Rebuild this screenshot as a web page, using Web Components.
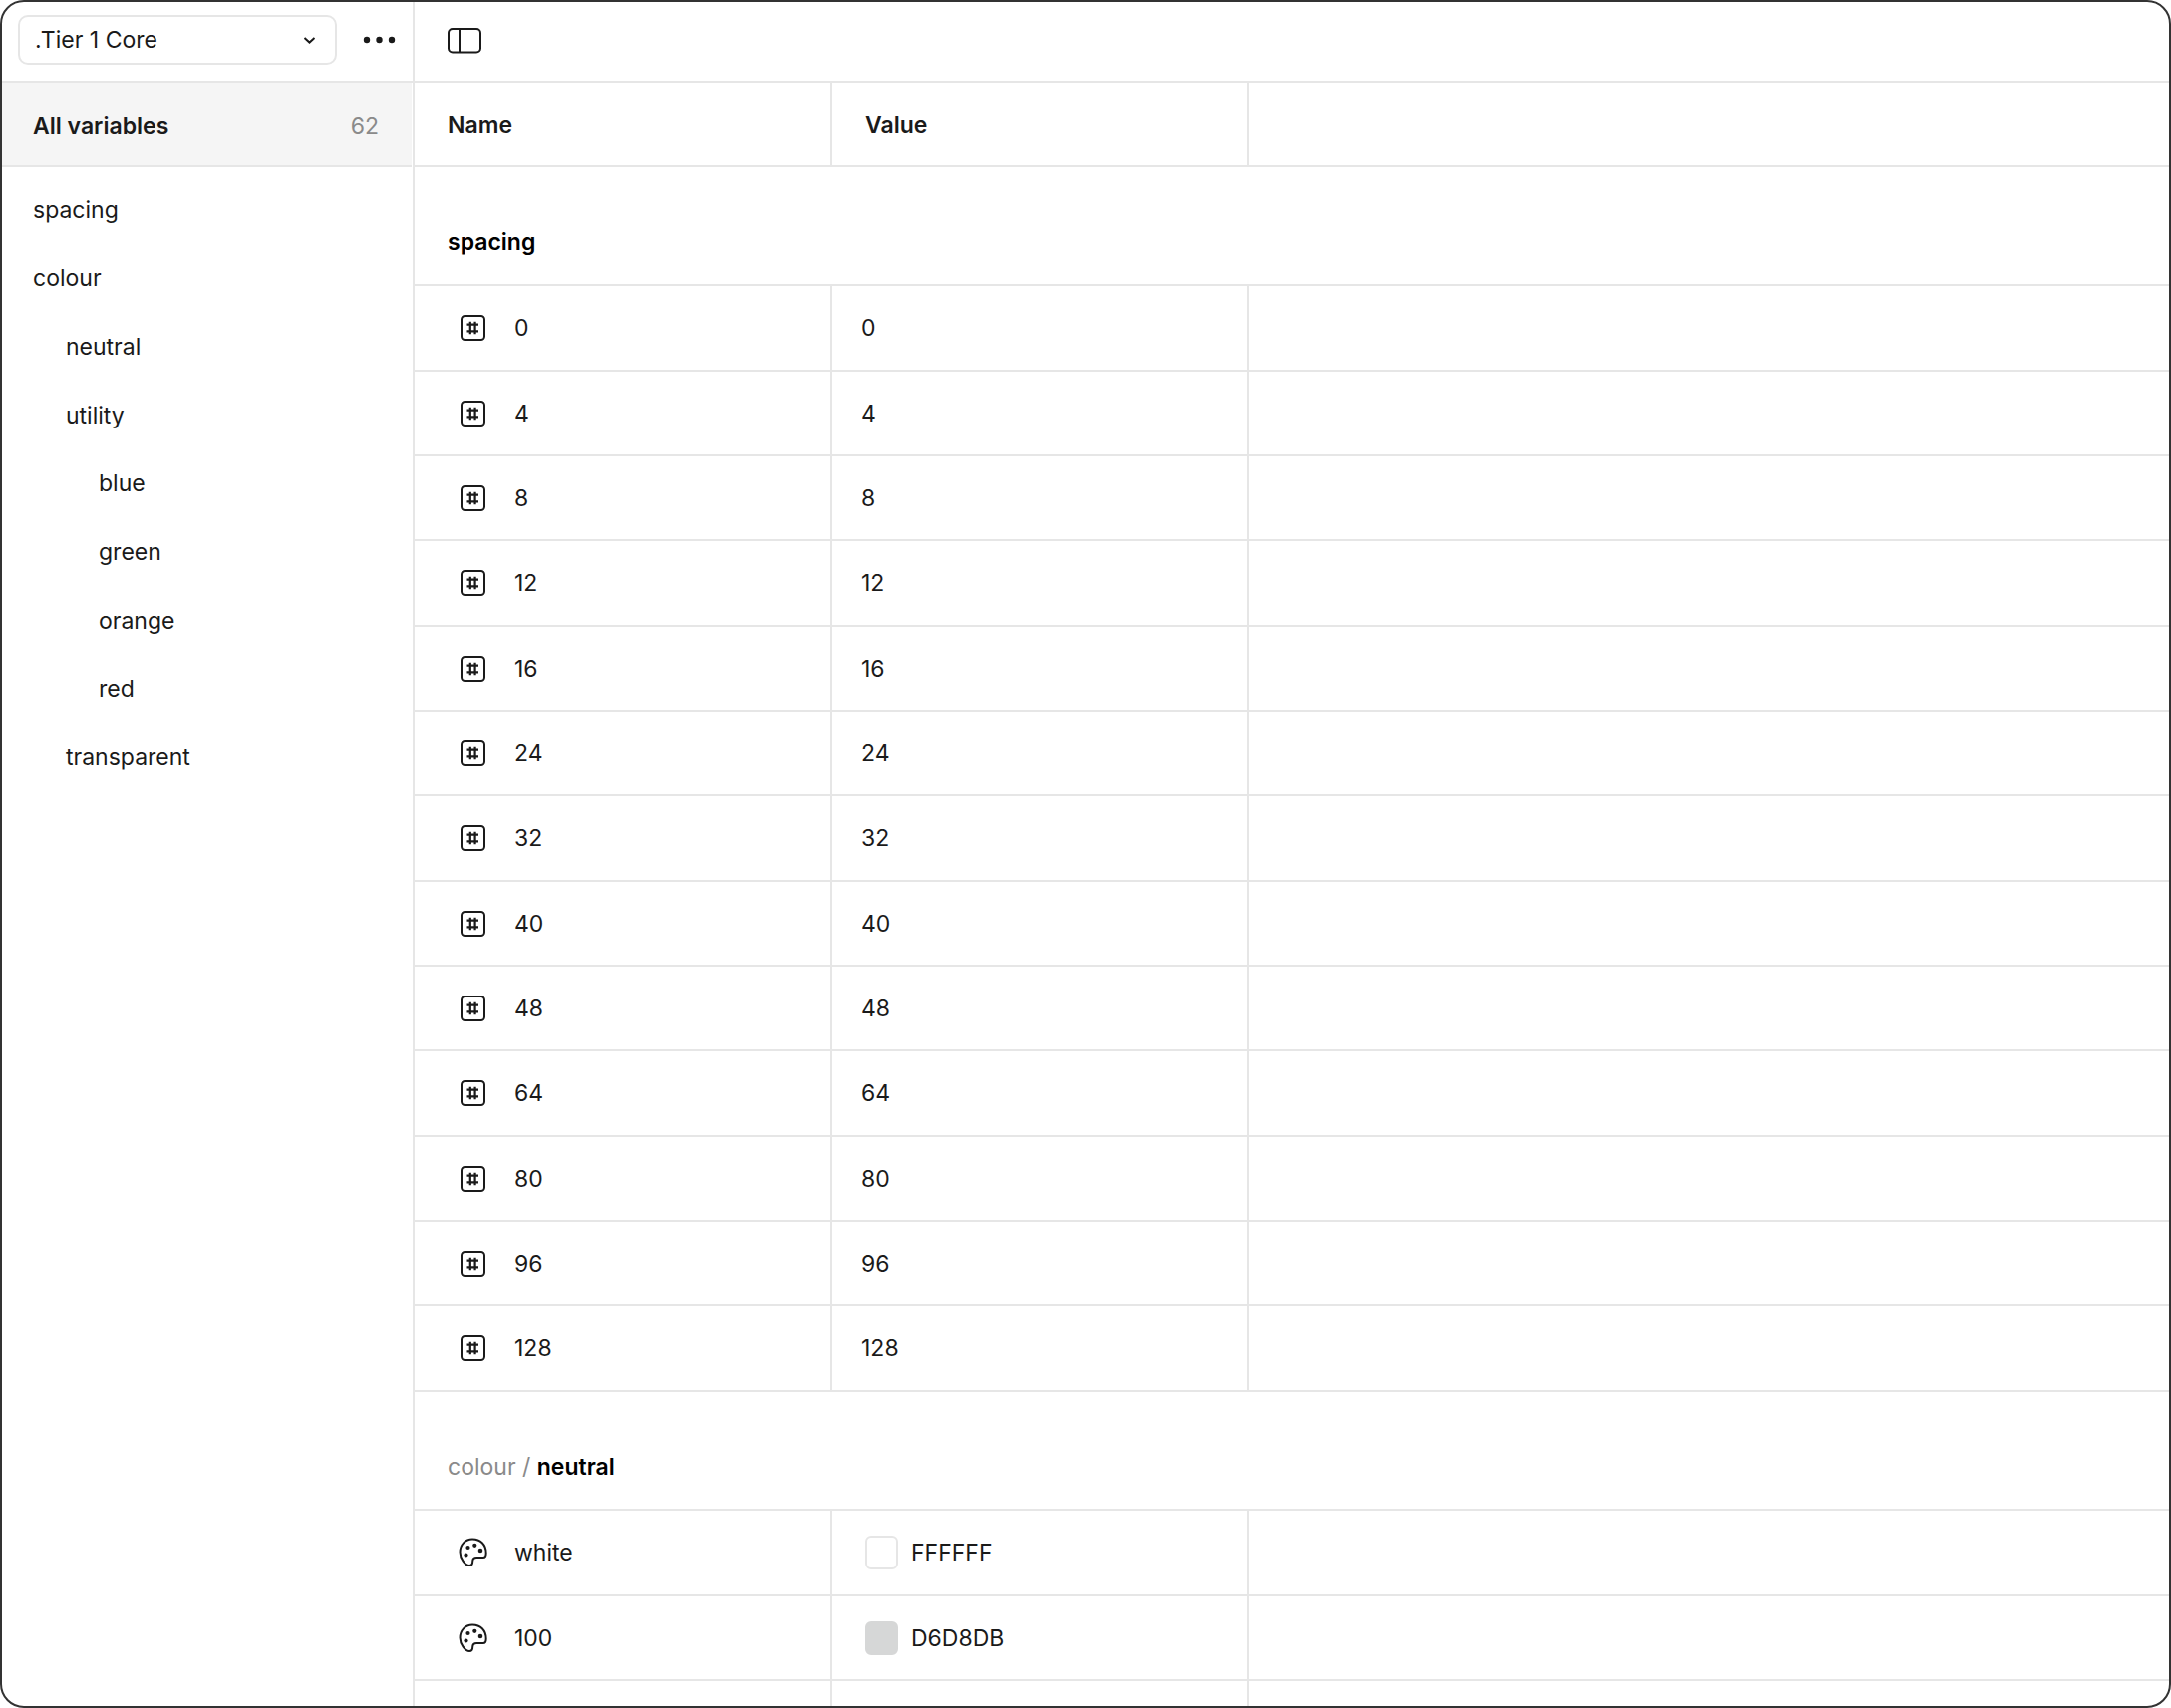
<!DOCTYPE html>
<html lang="en">
<head>
<meta charset="utf-8">
<title>Variables</title>
<style>
  html, body { height: 100%; margin: 0; background: #fff; }
  body {
    --line: #e6e6e6;
    --muted: #8a8a8a;
    font: 400 23px/28px Inter, "Liberation Sans", sans-serif;
    color: #1a1a1a;
  }
</style>
</head>
<body>
<variables-window>
  <collection-picker slot="tools"></collection-picker>
  <group-nav slot="side"></group-nav>
  <view-toolbar slot="bar"></view-toolbar>
  <variable-table slot="main"></variable-table>
</variables-window>

<script>
function define(name, html, setup) {
  const template = document.createElement('template');
  template.innerHTML = html;
  customElements.define(name, class extends HTMLElement {
    constructor() {
      super();
      this.attachShadow({ mode: 'open' }).append(template.content.cloneNode(true));
    }
    connectedCallback() { if (setup) setup(this, this.shadowRoot); }
  });
}

define('variables-window', `
<style>
  :host { display: grid; grid-template-columns: 414px minmax(0, 1fr); box-sizing: border-box;
    height: 100vh; overflow: hidden; border: 2px solid #333; border-radius: 24px; background: #fff; }
  aside, main { display: flex; flex-direction: column; min-width: 0; min-height: 0; }
  aside { border-right: 2px solid var(--line); }
  main { overflow: hidden; }
  ::slotted(*) { flex: none; }
</style>
<aside><slot name="tools"></slot><slot name="side"></slot></aside>
<main><slot name="bar"></slot><slot name="main"></slot></main>
`);

define('collection-picker', `
<style>
  :host { display: flex; align-items: center; gap: 24px; box-sizing: border-box; height: 81px;
    padding: 0 14px 4px 16px; border-bottom: 2px solid var(--line); }
  label { display: grid; flex: 1; align-items: center; }
  select, svg { grid-area: 1 / 1; }
  select { appearance: none; width: 100%; height: 50px; margin: 0; padding: 0 48px 0 15px;
    border: 2px solid var(--line); border-radius: 10px; background: #fff; font: inherit; color: inherit; }
  label svg { justify-self: end; margin-right: 20px; pointer-events: none; }
  button { display: flex; padding: 0; border: 0; background: none; color: inherit; }
</style>
<label>
  <select aria-label="Collection"><option>.Tier 1 Core</option></select>
  <svg width="14" height="14" viewBox="0 0 14 14" fill="none" stroke="currentColor" stroke-width="2"><path d="M1.500 5l5 4.6L11.500 5"/></svg>
</label>
<button aria-label="More options">
  <svg width="38" height="14" viewBox="0 0 38 14" fill="currentColor"><circle cx="6" cy="7" r="3.2"/><circle cx="18.500" cy="7" r="3.2"/><circle cx="31" cy="7" r="3.2"/></svg>
</button>
`);

define('nav-item', `
<style>
  :host { display: block; }
  a { display: flex; align-items: center; height: 100%; color: inherit; text-decoration: none; }
</style>
<a href="#"><slot></slot></a>
`, (host, root) => { root.querySelector('a').style.paddingLeft = (31 + 33 * Number(host.getAttribute('level') || 0)) + 'px'; });

define('group-nav', `
<style>
  :host { display: block; }
  .all { display: flex; justify-content: space-between; align-items: center; box-sizing: border-box; height: 85px;
    margin-right: 1px; padding: 2px 33px 0 31px; background: #f5f5f5; border-bottom: 2px solid var(--line);
    color: inherit; text-decoration: none; }
  b { font-weight: 600; }
  .count { color: var(--muted); }
  nav { padding-top: 8px; }
  nav nav-item { height: 69px; }
  nav nav-item:nth-child(3n + 2) { height: 68px; }
</style>
<a class="all" href="#"><b>All variables</b><span class="count">62</span></a>
<nav aria-label="Groups">
  <nav-item>spacing</nav-item>
  <nav-item>colour</nav-item>
  <nav-item level="1">neutral</nav-item>
  <nav-item level="1">utility</nav-item>
  <nav-item level="2">blue</nav-item>
  <nav-item level="2">green</nav-item>
  <nav-item level="2">orange</nav-item>
  <nav-item level="2">red</nav-item>
  <nav-item level="1">transparent</nav-item>
</nav>
`);

define('view-toolbar', `
<style>
  :host { display: flex; align-items: center; box-sizing: border-box; height: 81px; padding: 0 32px;
    border-bottom: 2px solid var(--line); }
  button { display: flex; padding: 0; border: 0; background: none; color: inherit; }
</style>
<button aria-label="Toggle sidebar">
  <svg width="36" height="28" viewBox="0 0 36 28" fill="none" stroke="currentColor" stroke-width="2"><rect x="2" y="1" width="32" height="23.500" rx="4"/><path d="M13 1v23.500"/></svg>
</button>
`);

const icons = {
  number: '<rect x="4" y="3" width="23" height="24" rx="3.500"/><path stroke-width="2.200" d="M9.500 11.700h11.500M9.500 18.300h11.500M12.800 8.800v12.400M17.600 8.800v12.400"/>',
  colour: '<path d="M15 1.500C7.500 1.500 2.500 7.500 2.500 14.500 2.500 21 7.500 28 12 28c2.500 0 3.200-1.800 3.200-4 0-3 1-4 4-4h6.500c2 0 3-1.500 3-4.500C28.700 7 23 1.500 15 1.500z"/><g fill="currentColor" stroke="none"><circle cx="10.500" cy="10" r="2.100"/><circle cx="17.300" cy="7.800" r="2.100"/><circle cx="23" cy="13" r="2.300"/><circle cx="8.500" cy="17.500" r="2.100"/></g>'
};
define('type-icon', `
<style>:host { display: flex; flex: none; } svg { display: block; }</style>
<svg width="32" height="30" viewBox="0 0 32 30" fill="none" stroke="currentColor" stroke-width="2"></svg>
`, (host, root) => { root.querySelector('svg').innerHTML = icons[host.getAttribute('kind')]; });

define('colour-value', `
<style>
  :host { display: flex; align-items: center; gap: 13px; padding-left: 4px; }
  i { box-sizing: border-box; width: 33px; height: 34px; border: 2px solid var(--line); border-radius: 6px; }
</style>
<i></i><span><slot></slot></span>
`, (host, root) => {
  const chip = root.querySelector('i');
  const fill = host.getAttribute('fill');
  chip.style.background = fill;
  if (fill !== '#ffffff') chip.style.borderColor = fill;
});

define('variable-table', `
<style>
  :host { display: block; }
  table { width: 100%; border-collapse: separate; border-spacing: 0; table-layout: fixed; }
  .first { width: 419px; }
  .second { width: 418px; }
  th, td { box-sizing: border-box; height: 85px; padding: 0; border-bottom: 2px solid var(--line);
    text-align: left; font-weight: 400; vertical-align: middle; }
  tr:nth-child(3n + 2) > * { height: 86px; }
  thead th:not(:last-child), th[scope="row"], td:nth-child(2) { border-right: 2px solid var(--line); }
  thead th { padding-left: 33px; font-weight: 600; }
  tbody tr.group th { height: 119px; padding: 33px 0 0 33px; color: var(--muted); }
  .group b { font-weight: 600; color: #000; }
  td { padding-left: 29px; }
  .name { display: flex; align-items: center; gap: 25px; padding-left: 43px; }
</style>
<table>
  <colgroup><col class="first"><col class="second"><col></colgroup>
  <thead><tr><th scope="col">Name</th><th scope="col">Value</th><th></th></tr></thead>
</table>
`, (host, root) => {
  const table = root.querySelector('table');
  const row = (kind, name, value) =>
    `<tr><th scope="row"><div class="name"><type-icon kind="${kind}"></type-icon><span>${name}</span></div></th><td>${value}</td><td></td></tr>`;
  const group = (title, rows) =>
    table.insertAdjacentHTML('beforeend', `<tbody><tr class="group"><th colspan="3" scope="rowgroup">${title}</th></tr>${rows}</tbody>`);
  group('<b>spacing</b>', [0, 4, 8, 12, 16, 24, 32, 40, 48, 64, 80, 96, 128].map(n => row('number', n, n)).join(''));
  group('colour / <b>neutral</b>',
    row('colour', 'white', '<colour-value fill="#ffffff">FFFFFF</colour-value>') +
    row('colour', '100', '<colour-value fill="#d6d7d7">D6D8DB</colour-value>') +
    '<tr><th scope="row"></th><td></td><td></td></tr>');
});
</script>
</body>
</html>
